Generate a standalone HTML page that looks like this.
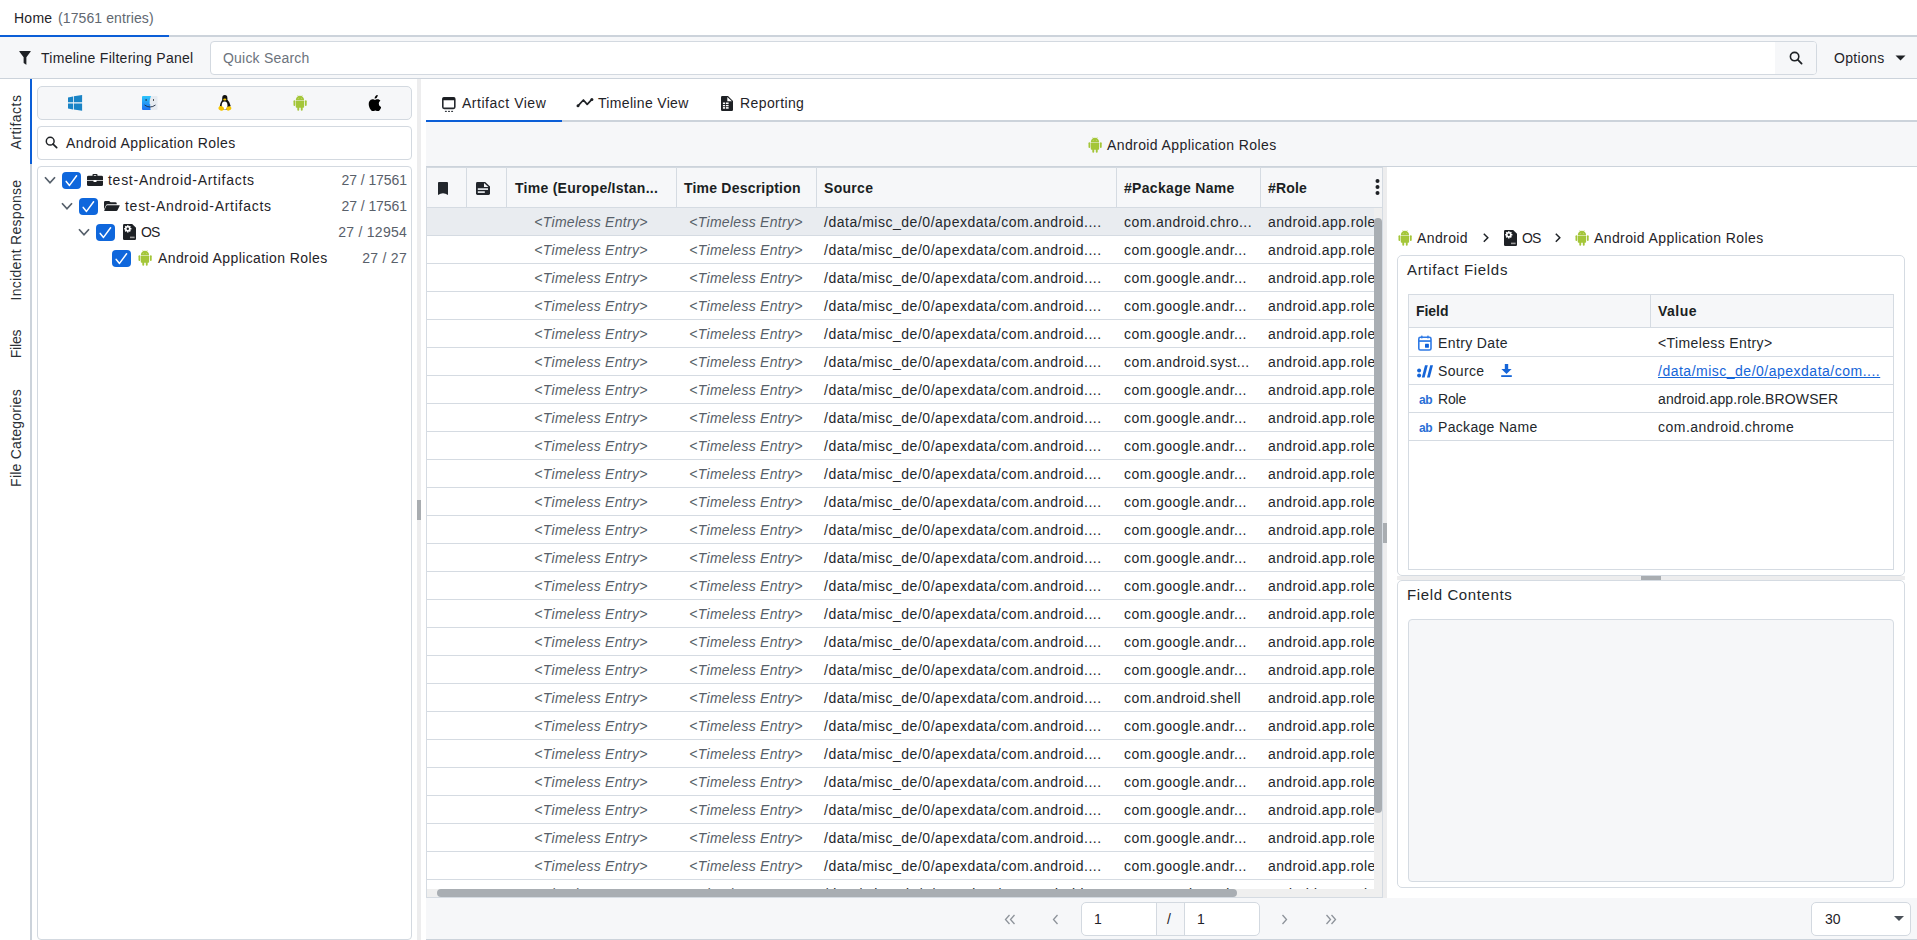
<!DOCTYPE html><html><head><meta charset="utf-8"><style>
*{box-sizing:border-box;margin:0;padding:0}
html,body{width:1917px;height:940px;overflow:hidden;background:#fff;font-family:"Liberation Sans", sans-serif;color:#212529;font-size:14px}
.abs{position:absolute}
svg{display:block}
.t{position:absolute;white-space:nowrap;line-height:16px}
.cb{position:absolute;width:19px;height:17px;background:#0f67dc;border-radius:4px}
.cb svg{position:absolute;left:0;top:0}
.ab{position:absolute;font-weight:700;color:#2a6fd6;font-size:12px;line-height:12px;letter-spacing:-0.3px}
.row{position:absolute;left:427px;width:955px;height:28px;border-bottom:1px solid #d5dbe2;background:#fff}
.row.sel{background:#e9ecf0}
.row .c{position:absolute;top:6px;white-space:nowrap;line-height:16px;color:#23272c}
.row .ts{font-style:italic;color:#575f69;text-align:center}
</style></head><body><div class="abs" style="left:0;top:0;width:1917px;height:35px;background:#fff"></div>
<div class="t" style="left:14px;top:10px;font-size:14px;color:#1f2328;letter-spacing:0.25px">Home</div>
<div class="t" style="left:58px;top:10px;font-size:14px;color:#616871;letter-spacing:0.1px">(17561 entries)</div>
<div class="abs" style="left:0;top:35px;width:1917px;height:2px;background:#ccd3db"></div>
<div class="abs" style="left:0;top:35px;width:169px;height:2px;background:#0b5ed7"></div>
<div class="abs" style="left:0;top:37px;width:1917px;height:41px;background:#f6f7f9;border-bottom:1px solid #ccd3db;height:42px"></div>
<div class="abs" style="left:19px;top:51px"><svg width="12" height="14" viewBox="0 0 13 14" preserveAspectRatio="none"><path d="M0.3 0.6 Q0 0 0.8 0 H12.2 Q13 0 12.7 0.6 L8 6.2 V13.4 Q8 14 7.4 13.6 L5.4 12.2 Q5 12 5 11.5 V6.2 Z" fill="#1e2125"/></svg></div>
<div class="t" style="left:41px;top:50px;color:#1f2328;letter-spacing:0.28px">Timeline Filtering Panel</div>
<div class="abs" style="left:210px;top:41px;width:1607px;height:34px;background:#fff;border:1px solid #d3d9e0;border-radius:4px;overflow:hidden"><div class="abs" style="right:0;top:0;width:41px;height:32px;background:#f6f7f9"></div></div>
<div class="t" style="left:223px;top:50px;color:#6c737c;letter-spacing:0.2px">Quick Search</div>
<div class="abs" style="left:1789px;top:51px"><svg width="14" height="14" viewBox="0 0 14 14"><circle cx="5.6" cy="5.6" r="4.2" fill="none" stroke="#1e2125" stroke-width="1.6"/><path d="M8.7 8.7 L12.6 12.6" stroke="#1e2125" stroke-width="1.8" stroke-linecap="round"/></svg></div>
<div class="t" style="left:1834px;top:50px;color:#1f2328;letter-spacing:0.32px">Options</div>
<svg class="abs" style="left:1895px;top:55px" width="11" height="6" viewBox="0 0 11 6"><path d="M0.5 0.5 H10.5 L5.5 5.5Z" fill="#1e2125"/></svg>
<div class="abs" style="left:30px;top:79px;width:2px;height:861px;background:#ccd3db"></div>
<div class="abs" style="left:30px;top:79px;width:2px;height:85px;background:#0b5ed7"></div>
<div class="t" style="left:16px;top:121.5px;width:0;height:0"><div style="position:absolute;left:0;top:0;transform:translate(-50%,-50%) rotate(-90deg);white-space:nowrap;line-height:16px;color:#2b3036;letter-spacing:0.49px">Artifacts</div></div>
<div class="t" style="left:16px;top:239.5px;width:0;height:0"><div style="position:absolute;left:0;top:0;transform:translate(-50%,-50%) rotate(-90deg);white-space:nowrap;line-height:16px;color:#2b3036;letter-spacing:0.29px">Incident Response</div></div>
<div class="t" style="left:16px;top:344.15px;width:0;height:0"><div style="position:absolute;left:0;top:0;transform:translate(-50%,-50%) rotate(-90deg);white-space:nowrap;line-height:16px;color:#2b3036;letter-spacing:-0.2px">Files</div></div>
<div class="t" style="left:16px;top:438.29999999999995px;width:0;height:0"><div style="position:absolute;left:0;top:0;transform:translate(-50%,-50%) rotate(-90deg);white-space:nowrap;line-height:16px;color:#2b3036;letter-spacing:0.24px">File Categories</div></div>
<div class="abs" style="left:37px;top:86px;width:375px;height:34px;background:#f6f7f9;border:1px solid #d3d9e0;border-radius:5px"></div>
<div class="abs" style="left:68px;top:95px"><svg width="15" height="16" viewBox="0 0 15 16"><g fill="#1a84c6"><polygon points="0,2.4 5,1.6 5,7.3 0,7.3"/><polygon points="5.8,1.2 14.1,0 14.1,7.3 5.8,7.3"/><polygon points="0,8.6 5,8.6 5,14.4 0,13.6"/><polygon points="5.8,8.6 14.1,8.6 14.1,15.8 5.8,14.6"/></g></svg></div>
<div class="abs" style="left:142px;top:96px"><svg width="16" height="14" viewBox="0 0 16 14"><defs><linearGradient id="fg" x1="0" y1="0" x2="0" y2="1"><stop offset="0" stop-color="#2ec6fb"/><stop offset="1" stop-color="#1a6ff0"/></linearGradient></defs><rect x="0.5" y="0" width="15" height="14" rx="1" fill="#e6ebf1"/><path d="M1 0 H9 Q7.2 4 7.6 8 H8.2 Q8 11 8.6 14 H1 Q0 14 0 13 V1 Q0 0 1 0Z" fill="url(#fg)"/><rect x="3.6" y="3" width="1" height="2" fill="#1b2a44"/><rect x="11" y="3" width="1" height="2" fill="#555"/><path d="M2.5 9 Q8 13 13.5 9" fill="none" stroke="#1b2a44" stroke-width="0.9"/></svg></div>
<div class="abs" style="left:218px;top:95px"><svg width="14" height="16" viewBox="0 0 14 16"><ellipse cx="6.8" cy="3.4" rx="2.6" ry="3.3" fill="#111"/><path d="M4.4 4.6 Q2.6 7.4 1.8 11 L3.4 14.6 L10.4 14.6 L12.6 10.8 Q11.6 6.6 9.2 4.6Z" fill="#111"/><ellipse cx="6.6" cy="10.4" rx="2.9" ry="4" fill="#fff"/><ellipse cx="6.8" cy="4.4" rx="1.6" ry="1" fill="#f5c400"/><ellipse cx="3.2" cy="13.4" rx="2.8" ry="2.2" fill="#f5c400" transform="rotate(20 3.2 13.4)"/><ellipse cx="10.8" cy="13.4" rx="2.6" ry="2.1" fill="#f5c400" transform="rotate(-20 10.8 13.4)"/></svg></div>
<div class="abs" style="left:293px;top:95px"><svg width="14" height="16" viewBox="0 0 14 16"><g fill="#a4c639"><path d="M4.6 0.2 L5.4 1.4 M9.4 0.2 L8.6 1.4" stroke="#a4c639" stroke-width="0.5"/><path d="M2.8 5 A4.15 4.3 0 0 1 11.1 5 Z"/><path d="M2.8 5.4 H11.1 V12 Q11.1 12.8 10.3 12.8 H3.6 Q2.8 12.8 2.8 12 Z"/><rect x="0.5" y="5.3" width="1.8" height="5.7" rx="0.9"/><rect x="11.9" y="5.3" width="1.8" height="5.7" rx="0.9"/><rect x="4.3" y="11.5" width="1.9" height="4.3" rx="0.95"/><rect x="7.8" y="11.5" width="1.9" height="4.3" rx="0.95"/></g><g fill="#fff" opacity="0.55"><circle cx="5.2" cy="3.2" r="0.45"/><circle cx="8.7" cy="3.2" r="0.45"/></g></svg></div>
<div class="abs" style="left:368px;top:95px"><svg width="13" height="16" viewBox="0 0 13 16"><path d="M10.8 8.5 C10.8 6.6 12.3 5.8 12.4 5.7 C11.5 4.4 10.2 4.3 9.7 4.3 C8.6 4.2 7.5 4.9 7 4.9 C6.4 4.9 5.5 4.3 4.6 4.3 C3.3 4.3 2.1 5.1 1.4 6.3 C0 8.7 1 12.3 2.4 14.3 C3.1 15.3 3.9 16.3 4.9 16.3 C5.9 16.2 6.2 15.6 7.4 15.6 C8.6 15.6 8.9 16.3 9.9 16.3 C11 16.3 11.6 15.3 12.3 14.3 C13 13.2 13.3 12.2 13.3 12.1 C13.3 12.1 10.8 11.2 10.8 8.5Z M8.9 2.6 C9.4 1.9 9.8 1 9.7 0 C8.9 0 7.9 0.6 7.4 1.2 C6.9 1.8 6.5 2.7 6.6 3.6 C7.5 3.7 8.4 3.2 8.9 2.6Z" fill="#000"/></svg></div>
<div class="abs" style="left:37px;top:126px;width:375px;height:34px;background:#fff;border:1px solid #d3d9e0;border-radius:4px"></div>
<div class="abs" style="left:45px;top:136px"><svg width="13" height="13" viewBox="0 0 14 14"><circle cx="5.6" cy="5.6" r="4.2" fill="none" stroke="#1e2125" stroke-width="1.6"/><path d="M8.7 8.7 L12.6 12.6" stroke="#1e2125" stroke-width="1.8" stroke-linecap="round"/></svg></div>
<div class="t" style="left:66px;top:135px;color:#1f2328;letter-spacing:0.4px">Android Application Roles</div>
<div class="abs" style="left:37px;top:166px;width:375px;height:774px;background:#fff;border:1px solid #d3d9e0;border-radius:4px"></div>
<svg class="abs" style="left:44px;top:176px" width="12" height="9" viewBox="0 0 12 9"><path d="M1 1.2 L6 6.8 L11 1.2" fill="none" stroke="#56606b" stroke-width="1.7"/></svg>
<div class="cb" style="left:62px;top:172px"><svg width="19" height="17" viewBox="0 0 19 17"><path d="M4.2 9.4 L7.5 13.4 L14.6 3.8" fill="none" stroke="#fff" stroke-width="1.5" stroke-linecap="round" stroke-linejoin="round"/></svg></div>
<div class="abs" style="left:87px;top:174px"><svg width="16" height="12" viewBox="0 0 16 14" preserveAspectRatio="none"><path d="M5.5 2 V1 Q5.5 0 6.5 0 H9.5 Q10.5 0 10.5 1 V2 H14.5 Q16 2 16 3.5 V7 H0 V3.5 Q0 2 1.5 2 Z M6.8 1.2 V2 H9.2 V1.2 Z" fill="#1e2125"/><path d="M0 8 H6.5 V9.3 H9.5 V8 H16 V12.5 Q16 14 14.5 14 H1.5 Q0 14 0 12.5Z" fill="#1e2125"/></svg></div>
<div class="t" style="left:108px;top:172px;color:#1f2328;letter-spacing:0.73px">test-Android-Artifacts</div>
<div class="t" style="left:407px;top:172px;color:#59606a;letter-spacing:-0.07px;transform:translateX(-100%)">27 / 17561</div>
<svg class="abs" style="left:61px;top:202px" width="12" height="9" viewBox="0 0 12 9"><path d="M1 1.2 L6 6.8 L11 1.2" fill="none" stroke="#56606b" stroke-width="1.7"/></svg>
<div class="cb" style="left:79px;top:198px"><svg width="19" height="17" viewBox="0 0 19 17"><path d="M4.2 9.4 L7.5 13.4 L14.6 3.8" fill="none" stroke="#fff" stroke-width="1.5" stroke-linecap="round" stroke-linejoin="round"/></svg></div>
<div class="abs" style="left:104px;top:201px"><svg width="16" height="10" viewBox="0 0 17 13" preserveAspectRatio="none"><path d="M0 1.5 Q0 0 1.5 0 H5.5 L7 1.6 H12 Q13.5 1.6 13.5 3 V4.2 H3.8 Q2.6 4.2 2.2 5.2 L0 11 Z" fill="#1e2125"/><path d="M3.2 5.4 H16.2 Q17 5.4 16.7 6.2 L14.3 12 Q14 13 13 13 H0.8 Q0 13 0.3 12.2 L2.4 6.2 Q2.7 5.4 3.2 5.4Z" fill="#1e2125"/></svg></div>
<div class="t" style="left:125px;top:198px;color:#1f2328;letter-spacing:0.73px">test-Android-Artifacts</div>
<div class="t" style="left:407px;top:198px;color:#59606a;letter-spacing:-0.07px;transform:translateX(-100%)">27 / 17561</div>
<svg class="abs" style="left:78px;top:228px" width="12" height="9" viewBox="0 0 12 9"><path d="M1 1.2 L6 6.8 L11 1.2" fill="none" stroke="#56606b" stroke-width="1.7"/></svg>
<div class="cb" style="left:96px;top:224px"><svg width="19" height="17" viewBox="0 0 19 17"><path d="M4.2 9.4 L7.5 13.4 L14.6 3.8" fill="none" stroke="#fff" stroke-width="1.5" stroke-linecap="round" stroke-linejoin="round"/></svg></div>
<div class="abs" style="left:123px;top:224px"><svg width="13" height="16" viewBox="0 0 13 16"><path d="M1.2 0 H9.2 L13 3.8 V14.8 Q13 16 11.8 16 H1.2 Q0 16 0 14.8 V1.2 Q0 0 1.2 0Z" fill="#1e2125"/><g stroke="#fff" stroke-width="1.5"><path d="M4.8 1.2 V8.4 M1.2 4.8 H8.4 M2.25 2.25 L7.35 7.35 M7.35 2.25 L2.25 7.35"/></g><circle cx="4.8" cy="4.8" r="2.7" fill="#fff"/><circle cx="4.8" cy="4.8" r="1.2" fill="#1e2125"/><rect x="7" y="12.6" width="4.6" height="1.6" fill="#9a9a9a"/></svg></div>
<div class="t" style="left:141px;top:224px;color:#1f2328;letter-spacing:-0.8px">OS</div>
<div class="t" style="left:407px;top:224px;color:#59606a;letter-spacing:0.25px;transform:translateX(-100%)">27 / 12954</div>
<div class="cb" style="left:112px;top:250px"><svg width="19" height="17" viewBox="0 0 19 17"><path d="M4.2 9.4 L7.5 13.4 L14.6 3.8" fill="none" stroke="#fff" stroke-width="1.5" stroke-linecap="round" stroke-linejoin="round"/></svg></div>
<div class="abs" style="left:138px;top:250px"><svg width="14" height="16" viewBox="0 0 14 16"><g fill="#a4c639"><path d="M4.6 0.2 L5.4 1.4 M9.4 0.2 L8.6 1.4" stroke="#a4c639" stroke-width="0.5"/><path d="M2.8 5 A4.15 4.3 0 0 1 11.1 5 Z"/><path d="M2.8 5.4 H11.1 V12 Q11.1 12.8 10.3 12.8 H3.6 Q2.8 12.8 2.8 12 Z"/><rect x="0.5" y="5.3" width="1.8" height="5.7" rx="0.9"/><rect x="11.9" y="5.3" width="1.8" height="5.7" rx="0.9"/><rect x="4.3" y="11.5" width="1.9" height="4.3" rx="0.95"/><rect x="7.8" y="11.5" width="1.9" height="4.3" rx="0.95"/></g><g fill="#fff" opacity="0.55"><circle cx="5.2" cy="3.2" r="0.45"/><circle cx="8.7" cy="3.2" r="0.45"/></g></svg></div>
<div class="t" style="left:158px;top:250px;color:#1f2328;letter-spacing:0.4px">Android Application Roles</div>
<div class="t" style="left:407px;top:250px;color:#59606a;letter-spacing:0.28px;transform:translateX(-100%)">27 / 27</div>
<div class="abs" style="left:417px;top:79px;width:4px;height:861px;background:#ededee"></div>
<div class="abs" style="left:417px;top:500px;width:4px;height:20px;background:#a9adb1"></div>
<div class="abs" style="left:426px;top:120px;width:1491px;height:2px;background:#ccd3db"></div>
<div class="abs" style="left:426px;top:120px;width:136px;height:2px;background:#0b5ed7"></div>
<div class="abs" style="left:442px;top:97px"><svg width="14" height="16" viewBox="0 0 14 16"><rect x="0.8" y="0.8" width="12" height="10.6" rx="1.3" fill="none" stroke="#25292e" stroke-width="1.6"/><rect x="0.8" y="0.6" width="12" height="2.6" rx="0.8" fill="#1a1d21"/><rect x="2.9" y="13.7" width="2" height="1.4" rx="0.6" fill="#3a3f45"/><rect x="6" y="13.7" width="2" height="1.4" rx="0.6" fill="#3a3f45"/><rect x="9.1" y="13.7" width="2" height="1.4" rx="0.6" fill="#3a3f45"/></svg></div>
<div class="t" style="left:462px;top:95px;color:#1f2328;letter-spacing:0.52px">Artifact View</div>
<div class="abs" style="left:576px;top:97px"><svg width="18" height="11" viewBox="0 0 18 11"><path d="M2 8.8 L7.4 3 L11.2 7.4 L15.9 2.4" fill="none" stroke="#1e2125" stroke-width="1.7" stroke-linejoin="round"/><circle cx="2" cy="8.8" r="1.5" fill="#1e2125"/><circle cx="15.9" cy="2.4" r="1.5" fill="#1e2125"/></svg></div>
<div class="t" style="left:598px;top:95px;color:#1f2328;letter-spacing:0.33px">Timeline View</div>
<div class="abs" style="left:721px;top:96px"><svg width="12" height="15" viewBox="0 0 12 15"><path d="M1.2 0 H7 L12 5 V13.8 Q12 15 10.8 15 H1.2 Q0 15 0 13.8 V1.2 Q0 0 1.2 0Z" fill="#1e2125"/><path d="M6.3 0.9 V5.2 H10.9Z" fill="#fff"/><g fill="#fff"><rect x="1.9" y="6.5" width="2.2" height="1.5"/><rect x="4.9" y="6.5" width="2.7" height="1.5"/><rect x="1.9" y="8.9" width="2.2" height="1.4"/><rect x="4.9" y="8.9" width="2.7" height="1.4"/><rect x="1.9" y="11.1" width="2.2" height="1.6"/><rect x="4.9" y="11.1" width="2.7" height="1.6"/></g></svg></div>
<div class="t" style="left:740px;top:95px;color:#1f2328;letter-spacing:0.4px">Reporting</div>
<div class="abs" style="left:426px;top:122px;width:1491px;height:45px;background:#f6f7f9;border-bottom:1px solid #ccd3db"></div>
<div class="abs" style="left:1088px;top:137px"><svg width="14" height="16" viewBox="0 0 14 16"><g fill="#a4c639"><path d="M4.6 0.2 L5.4 1.4 M9.4 0.2 L8.6 1.4" stroke="#a4c639" stroke-width="0.5"/><path d="M2.8 5 A4.15 4.3 0 0 1 11.1 5 Z"/><path d="M2.8 5.4 H11.1 V12 Q11.1 12.8 10.3 12.8 H3.6 Q2.8 12.8 2.8 12 Z"/><rect x="0.5" y="5.3" width="1.8" height="5.7" rx="0.9"/><rect x="11.9" y="5.3" width="1.8" height="5.7" rx="0.9"/><rect x="4.3" y="11.5" width="1.9" height="4.3" rx="0.95"/><rect x="7.8" y="11.5" width="1.9" height="4.3" rx="0.95"/></g><g fill="#fff" opacity="0.55"><circle cx="5.2" cy="3.2" r="0.45"/><circle cx="8.7" cy="3.2" r="0.45"/></g></svg></div>
<div class="t" style="left:1107px;top:137px;color:#1f2328;letter-spacing:0.4px">Android Application Roles</div>
<div class="abs" style="left:426px;top:167px;width:957px;height:731px;background:#fff;border:1px solid #d5dbe2;border-top:none"></div>
<div class="abs" style="left:427px;top:167px;width:955px;height:41px;background:#f6f7f9;border-bottom:1px solid #d5dbe2"></div>
<div class="abs" style="left:426px;top:167px;width:957px;height:1px;background:#d3d9e0"></div>
<div class="abs" style="left:466px;top:167px;width:1px;height:40px;background:#d5dbe2"></div>
<div class="abs" style="left:506px;top:167px;width:1px;height:40px;background:#d5dbe2"></div>
<div class="abs" style="left:676px;top:167px;width:1px;height:40px;background:#d5dbe2"></div>
<div class="abs" style="left:816px;top:167px;width:1px;height:40px;background:#d5dbe2"></div>
<div class="abs" style="left:1116px;top:167px;width:1px;height:40px;background:#d5dbe2"></div>
<div class="abs" style="left:1260px;top:167px;width:1px;height:40px;background:#d5dbe2"></div>
<div class="abs" style="left:438px;top:182px"><svg width="10" height="13" viewBox="0 0 10 13"><path d="M0 0.9 Q0 0 0.9 0 H9.1 Q10 0 10 0.9 V13 Q5 9.6 0 13Z" fill="#22262c"/></svg></div>
<div class="abs" style="left:476px;top:182px"><svg width="14" height="13" viewBox="0 0 14 13"><path d="M1.4 0 H9.2 L14 4.6 V11.6 Q14 13 12.6 13 H1.4 Q0 13 0 11.6 V1.4 Q0 0 1.4 0Z" fill="#22262c"/><path d="M8 0.9 V5 H12.4Z" fill="#f6f7f9"/><rect x="1.8" y="6.2" width="10.2" height="1.8" fill="#dcdfe3"/><rect x="1.8" y="9.2" width="7" height="1.8" fill="#dcdfe3"/></svg></div>
<div class="t" style="left:515px;top:180px;font-weight:700;color:#1b1f23;letter-spacing:0.27px">Time (Europe/Istan...</div>
<div class="t" style="left:684px;top:180px;font-weight:700;color:#1b1f23;letter-spacing:0.21px">Time Description</div>
<div class="t" style="left:824px;top:180px;font-weight:700;color:#1b1f23;letter-spacing:0.3px">Source</div>
<div class="t" style="left:1124px;top:180px;font-weight:700;color:#1b1f23;letter-spacing:0.31px">#Package Name</div>
<div class="t" style="left:1268px;top:180px;font-weight:700;color:#1b1f23;letter-spacing:0.18px">#Role</div>
<div class="abs" style="left:1375px;top:179px"><svg width="5" height="16" viewBox="0 0 5 16"><circle cx="2.5" cy="2" r="2" fill="#1e2125"/><circle cx="2.5" cy="8" r="2" fill="#1e2125"/><circle cx="2.5" cy="14" r="2" fill="#1e2125"/></svg></div>
<div class="abs" style="left:427px;top:208px;width:947px;height:681px;overflow:hidden">
<div class="row sel" style="left:0;top:0px"><div class="c ts" style="left:79px;width:170px;letter-spacing:0.28px">&lt;Timeless Entry&gt;</div><div class="c ts" style="left:249px;width:140px;letter-spacing:0.28px">&lt;Timeless Entry&gt;</div><div class="c" style="left:397px;letter-spacing:0.52px">/data/misc_de/0/apexdata/com.android....</div><div class="c" style="left:697px;letter-spacing:0.43px">com.android.chro...</div><div class="c" style="left:841px;letter-spacing:0.4px">android.app.role.BROWSER</div></div>
<div class="row" style="left:0;top:28px"><div class="c ts" style="left:79px;width:170px;letter-spacing:0.28px">&lt;Timeless Entry&gt;</div><div class="c ts" style="left:249px;width:140px;letter-spacing:0.28px">&lt;Timeless Entry&gt;</div><div class="c" style="left:397px;letter-spacing:0.52px">/data/misc_de/0/apexdata/com.android....</div><div class="c" style="left:697px;letter-spacing:0.43px">com.google.andr...</div><div class="c" style="left:841px;letter-spacing:0.4px">android.app.role.BROWSER</div></div>
<div class="row" style="left:0;top:56px"><div class="c ts" style="left:79px;width:170px;letter-spacing:0.28px">&lt;Timeless Entry&gt;</div><div class="c ts" style="left:249px;width:140px;letter-spacing:0.28px">&lt;Timeless Entry&gt;</div><div class="c" style="left:397px;letter-spacing:0.52px">/data/misc_de/0/apexdata/com.android....</div><div class="c" style="left:697px;letter-spacing:0.43px">com.google.andr...</div><div class="c" style="left:841px;letter-spacing:0.4px">android.app.role.BROWSER</div></div>
<div class="row" style="left:0;top:84px"><div class="c ts" style="left:79px;width:170px;letter-spacing:0.28px">&lt;Timeless Entry&gt;</div><div class="c ts" style="left:249px;width:140px;letter-spacing:0.28px">&lt;Timeless Entry&gt;</div><div class="c" style="left:397px;letter-spacing:0.52px">/data/misc_de/0/apexdata/com.android....</div><div class="c" style="left:697px;letter-spacing:0.43px">com.google.andr...</div><div class="c" style="left:841px;letter-spacing:0.4px">android.app.role.BROWSER</div></div>
<div class="row" style="left:0;top:112px"><div class="c ts" style="left:79px;width:170px;letter-spacing:0.28px">&lt;Timeless Entry&gt;</div><div class="c ts" style="left:249px;width:140px;letter-spacing:0.28px">&lt;Timeless Entry&gt;</div><div class="c" style="left:397px;letter-spacing:0.52px">/data/misc_de/0/apexdata/com.android....</div><div class="c" style="left:697px;letter-spacing:0.43px">com.google.andr...</div><div class="c" style="left:841px;letter-spacing:0.4px">android.app.role.BROWSER</div></div>
<div class="row" style="left:0;top:140px"><div class="c ts" style="left:79px;width:170px;letter-spacing:0.28px">&lt;Timeless Entry&gt;</div><div class="c ts" style="left:249px;width:140px;letter-spacing:0.28px">&lt;Timeless Entry&gt;</div><div class="c" style="left:397px;letter-spacing:0.52px">/data/misc_de/0/apexdata/com.android....</div><div class="c" style="left:697px;letter-spacing:0.43px">com.android.syst...</div><div class="c" style="left:841px;letter-spacing:0.4px">android.app.role.BROWSER</div></div>
<div class="row" style="left:0;top:168px"><div class="c ts" style="left:79px;width:170px;letter-spacing:0.28px">&lt;Timeless Entry&gt;</div><div class="c ts" style="left:249px;width:140px;letter-spacing:0.28px">&lt;Timeless Entry&gt;</div><div class="c" style="left:397px;letter-spacing:0.52px">/data/misc_de/0/apexdata/com.android....</div><div class="c" style="left:697px;letter-spacing:0.43px">com.google.andr...</div><div class="c" style="left:841px;letter-spacing:0.4px">android.app.role.BROWSER</div></div>
<div class="row" style="left:0;top:196px"><div class="c ts" style="left:79px;width:170px;letter-spacing:0.28px">&lt;Timeless Entry&gt;</div><div class="c ts" style="left:249px;width:140px;letter-spacing:0.28px">&lt;Timeless Entry&gt;</div><div class="c" style="left:397px;letter-spacing:0.52px">/data/misc_de/0/apexdata/com.android....</div><div class="c" style="left:697px;letter-spacing:0.43px">com.google.andr...</div><div class="c" style="left:841px;letter-spacing:0.4px">android.app.role.BROWSER</div></div>
<div class="row" style="left:0;top:224px"><div class="c ts" style="left:79px;width:170px;letter-spacing:0.28px">&lt;Timeless Entry&gt;</div><div class="c ts" style="left:249px;width:140px;letter-spacing:0.28px">&lt;Timeless Entry&gt;</div><div class="c" style="left:397px;letter-spacing:0.52px">/data/misc_de/0/apexdata/com.android....</div><div class="c" style="left:697px;letter-spacing:0.43px">com.google.andr...</div><div class="c" style="left:841px;letter-spacing:0.4px">android.app.role.BROWSER</div></div>
<div class="row" style="left:0;top:252px"><div class="c ts" style="left:79px;width:170px;letter-spacing:0.28px">&lt;Timeless Entry&gt;</div><div class="c ts" style="left:249px;width:140px;letter-spacing:0.28px">&lt;Timeless Entry&gt;</div><div class="c" style="left:397px;letter-spacing:0.52px">/data/misc_de/0/apexdata/com.android....</div><div class="c" style="left:697px;letter-spacing:0.43px">com.google.andr...</div><div class="c" style="left:841px;letter-spacing:0.4px">android.app.role.BROWSER</div></div>
<div class="row" style="left:0;top:280px"><div class="c ts" style="left:79px;width:170px;letter-spacing:0.28px">&lt;Timeless Entry&gt;</div><div class="c ts" style="left:249px;width:140px;letter-spacing:0.28px">&lt;Timeless Entry&gt;</div><div class="c" style="left:397px;letter-spacing:0.52px">/data/misc_de/0/apexdata/com.android....</div><div class="c" style="left:697px;letter-spacing:0.43px">com.google.andr...</div><div class="c" style="left:841px;letter-spacing:0.4px">android.app.role.BROWSER</div></div>
<div class="row" style="left:0;top:308px"><div class="c ts" style="left:79px;width:170px;letter-spacing:0.28px">&lt;Timeless Entry&gt;</div><div class="c ts" style="left:249px;width:140px;letter-spacing:0.28px">&lt;Timeless Entry&gt;</div><div class="c" style="left:397px;letter-spacing:0.52px">/data/misc_de/0/apexdata/com.android....</div><div class="c" style="left:697px;letter-spacing:0.43px">com.google.andr...</div><div class="c" style="left:841px;letter-spacing:0.4px">android.app.role.BROWSER</div></div>
<div class="row" style="left:0;top:336px"><div class="c ts" style="left:79px;width:170px;letter-spacing:0.28px">&lt;Timeless Entry&gt;</div><div class="c ts" style="left:249px;width:140px;letter-spacing:0.28px">&lt;Timeless Entry&gt;</div><div class="c" style="left:397px;letter-spacing:0.52px">/data/misc_de/0/apexdata/com.android....</div><div class="c" style="left:697px;letter-spacing:0.43px">com.google.andr...</div><div class="c" style="left:841px;letter-spacing:0.4px">android.app.role.BROWSER</div></div>
<div class="row" style="left:0;top:364px"><div class="c ts" style="left:79px;width:170px;letter-spacing:0.28px">&lt;Timeless Entry&gt;</div><div class="c ts" style="left:249px;width:140px;letter-spacing:0.28px">&lt;Timeless Entry&gt;</div><div class="c" style="left:397px;letter-spacing:0.52px">/data/misc_de/0/apexdata/com.android....</div><div class="c" style="left:697px;letter-spacing:0.43px">com.google.andr...</div><div class="c" style="left:841px;letter-spacing:0.4px">android.app.role.BROWSER</div></div>
<div class="row" style="left:0;top:392px"><div class="c ts" style="left:79px;width:170px;letter-spacing:0.28px">&lt;Timeless Entry&gt;</div><div class="c ts" style="left:249px;width:140px;letter-spacing:0.28px">&lt;Timeless Entry&gt;</div><div class="c" style="left:397px;letter-spacing:0.52px">/data/misc_de/0/apexdata/com.android....</div><div class="c" style="left:697px;letter-spacing:0.43px">com.google.andr...</div><div class="c" style="left:841px;letter-spacing:0.4px">android.app.role.BROWSER</div></div>
<div class="row" style="left:0;top:420px"><div class="c ts" style="left:79px;width:170px;letter-spacing:0.28px">&lt;Timeless Entry&gt;</div><div class="c ts" style="left:249px;width:140px;letter-spacing:0.28px">&lt;Timeless Entry&gt;</div><div class="c" style="left:397px;letter-spacing:0.52px">/data/misc_de/0/apexdata/com.android....</div><div class="c" style="left:697px;letter-spacing:0.43px">com.google.andr...</div><div class="c" style="left:841px;letter-spacing:0.4px">android.app.role.BROWSER</div></div>
<div class="row" style="left:0;top:448px"><div class="c ts" style="left:79px;width:170px;letter-spacing:0.28px">&lt;Timeless Entry&gt;</div><div class="c ts" style="left:249px;width:140px;letter-spacing:0.28px">&lt;Timeless Entry&gt;</div><div class="c" style="left:397px;letter-spacing:0.52px">/data/misc_de/0/apexdata/com.android....</div><div class="c" style="left:697px;letter-spacing:0.43px">com.google.andr...</div><div class="c" style="left:841px;letter-spacing:0.4px">android.app.role.BROWSER</div></div>
<div class="row" style="left:0;top:476px"><div class="c ts" style="left:79px;width:170px;letter-spacing:0.28px">&lt;Timeless Entry&gt;</div><div class="c ts" style="left:249px;width:140px;letter-spacing:0.28px">&lt;Timeless Entry&gt;</div><div class="c" style="left:397px;letter-spacing:0.52px">/data/misc_de/0/apexdata/com.android....</div><div class="c" style="left:697px;letter-spacing:0.43px">com.android.shell</div><div class="c" style="left:841px;letter-spacing:0.4px">android.app.role.BROWSER</div></div>
<div class="row" style="left:0;top:504px"><div class="c ts" style="left:79px;width:170px;letter-spacing:0.28px">&lt;Timeless Entry&gt;</div><div class="c ts" style="left:249px;width:140px;letter-spacing:0.28px">&lt;Timeless Entry&gt;</div><div class="c" style="left:397px;letter-spacing:0.52px">/data/misc_de/0/apexdata/com.android....</div><div class="c" style="left:697px;letter-spacing:0.43px">com.google.andr...</div><div class="c" style="left:841px;letter-spacing:0.4px">android.app.role.BROWSER</div></div>
<div class="row" style="left:0;top:532px"><div class="c ts" style="left:79px;width:170px;letter-spacing:0.28px">&lt;Timeless Entry&gt;</div><div class="c ts" style="left:249px;width:140px;letter-spacing:0.28px">&lt;Timeless Entry&gt;</div><div class="c" style="left:397px;letter-spacing:0.52px">/data/misc_de/0/apexdata/com.android....</div><div class="c" style="left:697px;letter-spacing:0.43px">com.google.andr...</div><div class="c" style="left:841px;letter-spacing:0.4px">android.app.role.BROWSER</div></div>
<div class="row" style="left:0;top:560px"><div class="c ts" style="left:79px;width:170px;letter-spacing:0.28px">&lt;Timeless Entry&gt;</div><div class="c ts" style="left:249px;width:140px;letter-spacing:0.28px">&lt;Timeless Entry&gt;</div><div class="c" style="left:397px;letter-spacing:0.52px">/data/misc_de/0/apexdata/com.android....</div><div class="c" style="left:697px;letter-spacing:0.43px">com.google.andr...</div><div class="c" style="left:841px;letter-spacing:0.4px">android.app.role.BROWSER</div></div>
<div class="row" style="left:0;top:588px"><div class="c ts" style="left:79px;width:170px;letter-spacing:0.28px">&lt;Timeless Entry&gt;</div><div class="c ts" style="left:249px;width:140px;letter-spacing:0.28px">&lt;Timeless Entry&gt;</div><div class="c" style="left:397px;letter-spacing:0.52px">/data/misc_de/0/apexdata/com.android....</div><div class="c" style="left:697px;letter-spacing:0.43px">com.google.andr...</div><div class="c" style="left:841px;letter-spacing:0.4px">android.app.role.BROWSER</div></div>
<div class="row" style="left:0;top:616px"><div class="c ts" style="left:79px;width:170px;letter-spacing:0.28px">&lt;Timeless Entry&gt;</div><div class="c ts" style="left:249px;width:140px;letter-spacing:0.28px">&lt;Timeless Entry&gt;</div><div class="c" style="left:397px;letter-spacing:0.52px">/data/misc_de/0/apexdata/com.android....</div><div class="c" style="left:697px;letter-spacing:0.43px">com.google.andr...</div><div class="c" style="left:841px;letter-spacing:0.4px">android.app.role.BROWSER</div></div>
<div class="row" style="left:0;top:644px"><div class="c ts" style="left:79px;width:170px;letter-spacing:0.28px">&lt;Timeless Entry&gt;</div><div class="c ts" style="left:249px;width:140px;letter-spacing:0.28px">&lt;Timeless Entry&gt;</div><div class="c" style="left:397px;letter-spacing:0.52px">/data/misc_de/0/apexdata/com.android....</div><div class="c" style="left:697px;letter-spacing:0.43px">com.google.andr...</div><div class="c" style="left:841px;letter-spacing:0.4px">android.app.role.BROWSER</div></div>
<div class="row" style="left:0;top:672px"><div class="c ts" style="left:79px;width:170px;letter-spacing:0.28px">&lt;Timeless Entry&gt;</div><div class="c ts" style="left:249px;width:140px;letter-spacing:0.28px">&lt;Timeless Entry&gt;</div><div class="c" style="left:397px;letter-spacing:0.52px">/data/misc_de/0/apexdata/com.android....</div><div class="c" style="left:697px;letter-spacing:0.43px">com.google.andr...</div><div class="c" style="left:841px;letter-spacing:0.4px">android.app.role.BROWSER</div></div>
</div>
<div class="abs" style="left:1374px;top:208px;width:8px;height:681px;background:#efefef"></div>
<div class="abs" style="left:1374px;top:218px;width:8px;height:595px;background:#a9aeb3;border-radius:4px"></div>
<div class="abs" style="left:427px;top:889px;width:955px;height:8px;background:#efefef"></div>
<div class="abs" style="left:437px;top:889px;width:800px;height:8px;background:#a9aeb3;border-radius:4px"></div>
<div class="abs" style="left:1383px;top:167px;width:4px;height:731px;background:#ededee"></div>
<div class="abs" style="left:1383px;top:523px;width:4px;height:20px;background:#a9adb1"></div>
<div class="abs" style="left:1398px;top:230px"><svg width="14" height="16" viewBox="0 0 14 16"><g fill="#a4c639"><path d="M4.6 0.2 L5.4 1.4 M9.4 0.2 L8.6 1.4" stroke="#a4c639" stroke-width="0.5"/><path d="M2.8 5 A4.15 4.3 0 0 1 11.1 5 Z"/><path d="M2.8 5.4 H11.1 V12 Q11.1 12.8 10.3 12.8 H3.6 Q2.8 12.8 2.8 12 Z"/><rect x="0.5" y="5.3" width="1.8" height="5.7" rx="0.9"/><rect x="11.9" y="5.3" width="1.8" height="5.7" rx="0.9"/><rect x="4.3" y="11.5" width="1.9" height="4.3" rx="0.95"/><rect x="7.8" y="11.5" width="1.9" height="4.3" rx="0.95"/></g><g fill="#fff" opacity="0.55"><circle cx="5.2" cy="3.2" r="0.45"/><circle cx="8.7" cy="3.2" r="0.45"/></g></svg></div>
<div class="t" style="left:1417px;top:230px;color:#1f2328;letter-spacing:0.4px">Android</div>
<div class="abs" style="left:1482px;top:233px"><svg width="8" height="10" viewBox="0 0 8 10"><path d="M1.8 0.8 L5.8 4.8 L1.8 8.8" fill="none" stroke="#1f2328" stroke-width="1.5"/></svg></div>
<div class="abs" style="left:1504px;top:230px"><svg width="13" height="16" viewBox="0 0 13 16"><path d="M1.2 0 H9.2 L13 3.8 V14.8 Q13 16 11.8 16 H1.2 Q0 16 0 14.8 V1.2 Q0 0 1.2 0Z" fill="#1e2125"/><g stroke="#fff" stroke-width="1.5"><path d="M4.8 1.2 V8.4 M1.2 4.8 H8.4 M2.25 2.25 L7.35 7.35 M7.35 2.25 L2.25 7.35"/></g><circle cx="4.8" cy="4.8" r="2.7" fill="#fff"/><circle cx="4.8" cy="4.8" r="1.2" fill="#1e2125"/><rect x="7" y="12.6" width="4.6" height="1.6" fill="#9a9a9a"/></svg></div>
<div class="t" style="left:1522px;top:230px;color:#1f2328;letter-spacing:-0.8px">OS</div>
<div class="abs" style="left:1554px;top:233px"><svg width="8" height="10" viewBox="0 0 8 10"><path d="M1.8 0.8 L5.8 4.8 L1.8 8.8" fill="none" stroke="#1f2328" stroke-width="1.5"/></svg></div>
<div class="abs" style="left:1575px;top:230px"><svg width="14" height="16" viewBox="0 0 14 16"><g fill="#a4c639"><path d="M4.6 0.2 L5.4 1.4 M9.4 0.2 L8.6 1.4" stroke="#a4c639" stroke-width="0.5"/><path d="M2.8 5 A4.15 4.3 0 0 1 11.1 5 Z"/><path d="M2.8 5.4 H11.1 V12 Q11.1 12.8 10.3 12.8 H3.6 Q2.8 12.8 2.8 12 Z"/><rect x="0.5" y="5.3" width="1.8" height="5.7" rx="0.9"/><rect x="11.9" y="5.3" width="1.8" height="5.7" rx="0.9"/><rect x="4.3" y="11.5" width="1.9" height="4.3" rx="0.95"/><rect x="7.8" y="11.5" width="1.9" height="4.3" rx="0.95"/></g><g fill="#fff" opacity="0.55"><circle cx="5.2" cy="3.2" r="0.45"/><circle cx="8.7" cy="3.2" r="0.45"/></g></svg></div>
<div class="t" style="left:1594px;top:230px;color:#1f2328;letter-spacing:0.4px">Android Application Roles</div>
<div class="abs" style="left:1397px;top:255px;width:508px;height:321px;background:#fff;border:1px solid #d5dbe2;border-radius:5px"></div>
<div class="t" style="left:1407px;top:262px;font-size:15px;color:#23272c;letter-spacing:0.68px">Artifact Fields</div>
<div class="abs" style="left:1408px;top:294px;width:486px;height:276px;background:#fff;border:1px solid #d5dbe2"></div>
<div class="abs" style="left:1409px;top:295px;width:484px;height:33px;background:#f6f7f9;border-bottom:1px solid #d5dbe2"></div>
<div class="abs" style="left:1650px;top:295px;width:1px;height:33px;background:#d5dbe2"></div>
<div class="t" style="left:1416px;top:303px;font-weight:700;color:#1b1f23;letter-spacing:-0.05px">Field</div>
<div class="t" style="left:1658px;top:303px;font-weight:700;color:#1b1f23;letter-spacing:0.5px">Value</div>
<div class="abs" style="left:1409px;top:356px;width:484px;height:1px;background:#d5dbe2"></div>
<div class="abs" style="left:1409px;top:384px;width:484px;height:1px;background:#d5dbe2"></div>
<div class="abs" style="left:1409px;top:412px;width:484px;height:1px;background:#d5dbe2"></div>
<div class="abs" style="left:1409px;top:440px;width:484px;height:1px;background:#d5dbe2"></div>
<div class="abs" style="left:1418px;top:335px"><svg width="14" height="16" viewBox="0 0 14 16"><rect x="0.8" y="2.3" width="12.2" height="12.7" rx="1.6" fill="none" stroke="#2f7ae5" stroke-width="1.6"/><rect x="0.8" y="5.2" width="12.2" height="1.7" fill="#2f7ae5"/><rect x="3.1" y="0.4" width="1.5" height="3" rx="0.6" fill="#2f7ae5"/><rect x="9.2" y="0.4" width="1.5" height="3" rx="0.6" fill="#2f7ae5"/><rect x="7" y="8.8" width="3.9" height="3.9" rx="0.4" fill="#0d5fd8"/></svg></div>
<div class="t" style="left:1438px;top:335px;color:#23272c;letter-spacing:0.38px">Entry Date</div>
<div class="t" style="left:1658px;top:335px;color:#23272c;letter-spacing:0.38px">&lt;Timeless Entry&gt;</div>
<div class="abs" style="left:1417px;top:365px"><svg width="16" height="13" viewBox="0 0 16 13"><g fill="#1565d8"><circle cx="2.1" cy="5.4" r="2"/><circle cx="2.1" cy="10.6" r="2"/><polygon points="8,0.2 10.8,0.2 7.6,12.4 4.8,12.4"/><polygon points="13.2,0.2 16,0.2 12.8,12.4 10,12.4"/></g></svg></div>
<div class="abs" style="left:1501px;top:364px"><svg width="11" height="13" viewBox="0 0 11 13"><g fill="#1565d8"><rect x="3.8" y="0" width="3.4" height="5.6"/><polygon points="0.4,5 10.6,5 5.5,10"/><rect x="0.2" y="11.2" width="10.6" height="1.8"/></g></svg></div>
<div class="t" style="left:1438px;top:363px;color:#23272c;letter-spacing:0.33px">Source</div>
<div class="t" style="left:1658px;top:363px;color:#1565d8;letter-spacing:0.5px;text-decoration:underline">/data/misc_de/0/apexdata/com....</div>
<div class="ab" style="left:1419px;top:394px">ab</div>
<div class="t" style="left:1438px;top:391px;color:#23272c;letter-spacing:-0.15px">Role</div>
<div class="t" style="left:1658px;top:391px;color:#23272c;letter-spacing:0.12px">android.app.role.BROWSER</div>
<div class="ab" style="left:1419px;top:422px">ab</div>
<div class="t" style="left:1438px;top:419px;color:#23272c;letter-spacing:0.32px">Package Name</div>
<div class="t" style="left:1658px;top:419px;color:#23272c;letter-spacing:0.48px">com.android.chrome</div>
<div class="abs" style="left:1397px;top:576px;width:508px;height:4px;background:#ededee"></div>
<div class="abs" style="left:1641px;top:576px;width:20px;height:4px;background:#a9adb1"></div>
<div class="abs" style="left:1397px;top:580px;width:508px;height:308px;background:#fff;border:1px solid #d5dbe2;border-radius:5px"></div>
<div class="t" style="left:1407px;top:587px;font-size:15px;color:#23272c;letter-spacing:0.62px">Field Contents</div>
<div class="abs" style="left:1408px;top:619px;width:486px;height:263px;background:#f6f7f9;border:1px solid #d5dbe2;border-radius:4px"></div>
<div class="abs" style="left:426px;top:898px;width:1491px;height:42px;background:#f6f7f9;border-bottom:1px solid #ccd3db"></div>
<svg class="abs" style="left:1004px;top:914px" width="12" height="11" viewBox="0 0 12 11"><path d="M5.5 1 L1.5 5.5 L5.5 10 M10.5 1 L6.5 5.5 L10.5 10" fill="none" stroke="#8d939a" stroke-width="1.3"/></svg>
<svg class="abs" style="left:1052px;top:914px" width="7" height="11" viewBox="0 0 7 11"><path d="M5.5 1 L1.5 5.5 L5.5 10" fill="none" stroke="#8d939a" stroke-width="1.3"/></svg>
<div class="abs" style="left:1081px;top:902px;width:179px;height:34px;background:#fff;border:1px solid #d3d9e0;border-radius:5px"></div>
<div class="abs" style="left:1156px;top:903px;width:29px;height:32px;background:#f6f7f9;border-left:1px solid #d3d9e0;border-right:1px solid #d3d9e0"></div>
<div class="t" style="left:1094px;top:911px;color:#1f2328">1</div>
<div class="t" style="left:1167px;top:911px;color:#1f2328">/</div>
<div class="t" style="left:1197px;top:911px;color:#1f2328">1</div>
<svg class="abs" style="left:1281px;top:914px" width="7" height="11" viewBox="0 0 7 11"><path d="M1.5 1 L5.5 5.5 L1.5 10" fill="none" stroke="#8d939a" stroke-width="1.3"/></svg>
<svg class="abs" style="left:1325px;top:914px" width="12" height="11" viewBox="0 0 12 11"><path d="M1.5 1 L5.5 5.5 L1.5 10 M6.5 1 L10.5 5.5 L6.5 10" fill="none" stroke="#8d939a" stroke-width="1.3"/></svg>
<div class="abs" style="left:1811px;top:902px;width:100px;height:34px;background:#fff;border:1px solid #d3d9e0;border-radius:5px"></div>
<div class="t" style="left:1825px;top:911px;color:#1f2328">30</div>
<svg class="abs" style="left:1894px;top:916px" width="10" height="5" viewBox="0 0 10 5"><path d="M0 0 H10 L5 5Z" fill="#4a5058"/></svg></body></html>
